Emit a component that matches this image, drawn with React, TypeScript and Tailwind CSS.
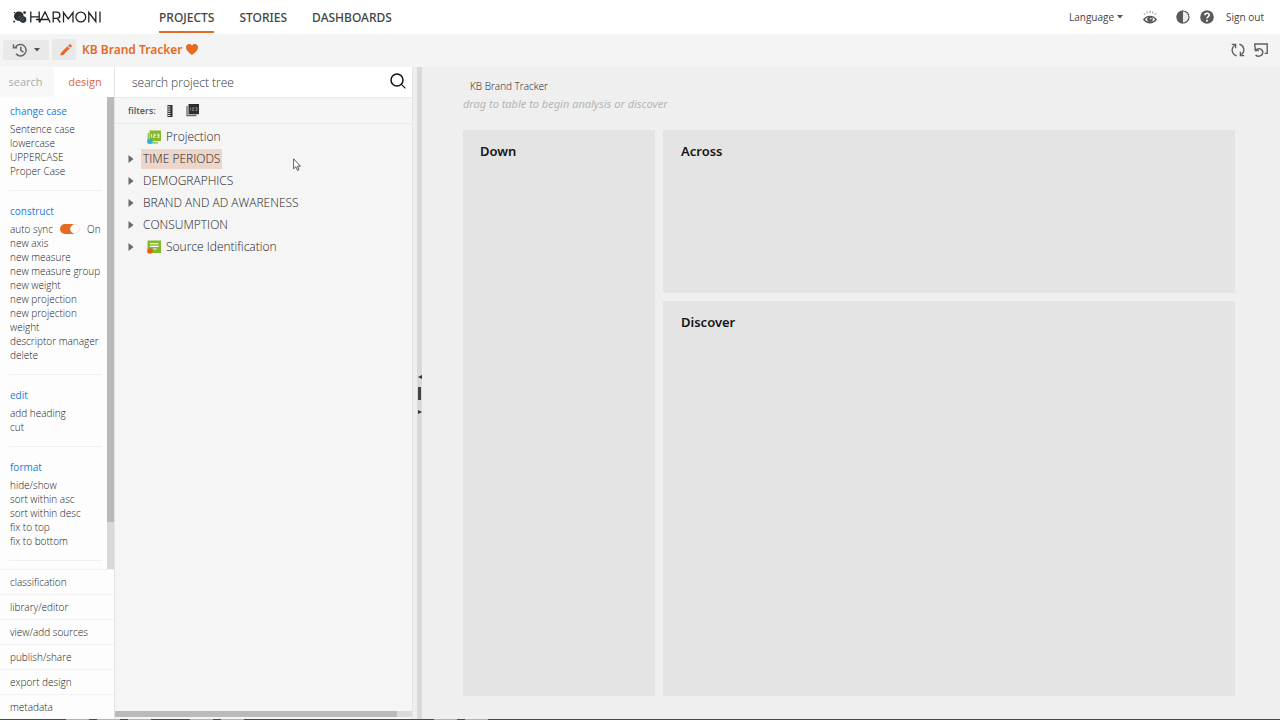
import React, { useState } from "react";

type Section = { title: string; items: string[] };

const sections: Section[] = [
  { title: "change case", items: ["Sentence case", "lowercase", "UPPERCASE", "Proper Case"] },
  {
    title: "construct",
    items: [
      "auto sync",
      "new axis",
      "new measure",
      "new measure group",
      "new weight",
      "new projection",
      "new projection weight",
      "descriptor manager",
      "delete",
    ],
  },
  { title: "edit", items: ["add heading", "cut"] },
  { title: "format", items: ["hide/show", "sort within asc", "sort within desc", "fix to top", "fix to bottom"] },
];

const footerItems = ["classification", "library/editor", "view/add sources", "publish/share", "export design", "metadata"];

function Logo() {
  return (
    <svg viewBox="0 0 88 14" className="h-3.5 w-22" role="img" aria-label="Harmoni">
      <circle cx="5.8" cy="6.2" r="4.8" fill="#2b2f33" />
      <circle cx="10" cy="9.6" r="3.3" fill="#2b2f33" />
      <circle cx="11.6" cy="2.600" r="1.400" fill="#2b2f33" />
      <circle cx="1.200" cy="11.400" r="1" fill="#2b2f33" />
      <circle cx="1.400" cy="2.400" r="0.700" fill="#2b2f33" />
      <path d="M5 8.500l3-3M7 10l3-3M8.500 11.500l2.500-2.500" stroke="#4b8e9b" strokeWidth="0.700" />
      <g fill="none" stroke="#222" strokeWidth="1.300">
        <path d="M17.800 1.500v11M26.200 1.500v11M17.800 6.800h8.400M26.500 12.500L32 2l5.200 10.500M23 9.500h13" />
        <path d="M40.200 12.500V2.200h3.600a3 3 0 0 1 0 6.200h-3.600M44.300 8.300l3 4.200" />
        <path d="M50.500 12.500V2.500l4.700 6.300L60 2.500v10" />
        <circle cx="67.800" cy="7" r="4.900" />
        <path d="M75.800 12.500V2.500l7 9v-10M87 1.500v11" />
      </g>
    </svg>
  );
}

function HistoryIcon() {
  return (
    <svg viewBox="0 0 16 14" className="h-3.5 w-4" fill="none" stroke="#666" strokeWidth="1.500">
      <path d="M3.600 4.200A5.700 5.700 0 1 1 4 10.800" />
      <path d="M1.500 1.200v3.600h3.600" />
      <path d="M8.800 3.800v3.600l2.700 1.700" />
    </svg>
  );
}

function PencilIcon() {
  return (
    <svg viewBox="0 0 14 14" className="size-3" fill="#e66a1f">
      <path d="M.5 13.500l.7-3.300 7.500-7.500 2.600 2.600-7.500 7.500zM9.500 1.900l1.300-1.300a1.300 1.300 0 0 1 1.800 0l.8.8a1.300 1.300 0 0 1 0 1.800l-1.300 1.300z" />
    </svg>
  );
}

function HeartIcon() {
  return (
    <svg viewBox="0 0 12 11" className="h-[11px] w-3" fill="#e66a1f">
      <path d="M6 11C4.500 9.500 0 6.800 0 3.400 0 1.400 1.400 0 3.200 0 4.400 0 5.400.6 6 1.600 6.600.6 7.600 0 8.800 0 10.600 0 12 1.400 12 3.400 12 6.800 7.500 9.500 6 11z" />
    </svg>
  );
}

function Caret() {
  return (
    <svg viewBox="0 0 6 4" className="h-1 w-1.5" fill="#555">
      <path d="M0 0h6L3 3.500z" />
    </svg>
  );
}

function EyeIcon() {
  return (
    <svg viewBox="0 0 14 14" className="size-3.5" fill="none" stroke="#5a5a5a">
      <path d="M.8 9.500C4 5.200 10 5.200 13.200 9.500 10 13.800 4 13.800.8 9.500z" strokeWidth="1.300" />
      <circle cx="7" cy="9.300" r="2.800" fill="#5a5a5a" stroke="none" />
      <circle cx="7.800" cy="8.600" r=".8" fill="#fff" stroke="none" />
      <path d="M1 3.200l1.200 1.400M3.800 1.500l.7 1.700M7 .8v2M10.200 1.500l-.7 1.700M13 3.200l-1.200 1.400" strokeWidth=".8" />
    </svg>
  );
}

function ContrastIcon() {
  return (
    <svg viewBox="0 0 14 14" className="size-3.5">
      <circle cx="7" cy="7" r="6" fill="#ececec" stroke="#5a5a5a" strokeWidth="1.200" />
      <path d="M7 .6a6.400 6.400 0 0 0 0 12.800z" fill="#5a5a5a" />
    </svg>
  );
}

function HelpIcon() {
  return (
    <svg viewBox="0 0 14 14" className="size-3.5">
      <circle cx="7" cy="7" r="6.800" fill="#5a5a5a" />
      <path d="M4.900 5.300c0-2.800 4.300-2.700 4.300-.2C9.200 6.700 7 6.700 7 8.600" fill="none" stroke="#fff" strokeWidth="1.600" />
      <circle cx="7" cy="10.700" r="1" fill="#fff" />
    </svg>
  );
}

function SyncIcon() {
  return (
    <svg viewBox="0 0 14 14" className="size-3.5" fill="none" stroke="#606060" strokeWidth="1.400">
      <path d="M5.600 12.800A6 6 0 0 1 3.600 2.200M.8 1.400h3.800v3.800" />
      <path d="M8.400 1.200a6 6 0 0 1 2 10.600M13.200 12.600H9.400V8.800" />
    </svg>
  );
}

function ResetIcon() {
  return (
    <svg viewBox="0 0 14 14" className="size-3.5" fill="none" stroke="#606060" strokeWidth="1.400">
      <path d="M.8 4V1h12.400v9.400h-2.600" />
      <path d="M1.200 4v3.600h3.600M1.600 7.200c2.400-2.600 7.200-1.700 7.200 2 0 3.800-4.800 5.200-7.200 2.700" />
    </svg>
  );
}

function SearchIcon() {
  return (
    <svg viewBox="0 0 16 16" className="size-4" fill="none" stroke="#111">
      <circle cx="7" cy="7" r="6" strokeWidth="1.500" />
      <path d="M11.400 11.400l4 4" strokeWidth="1.200" />
    </svg>
  );
}

function RulerIcon() {
  return (
    <svg viewBox="0 0 6 12" className="h-3 w-1.5">
      <path d="M.500 0h5v12h-5z" fill="#2d2d2d" />
      <path d="M1 1.800h2.500M1 4h2.500M1 6.200h2.500M1 8.400h2.500M1 10.500h2.500" stroke="#fff" strokeWidth=".9" />
    </svg>
  );
}

function StackIcon() {
  return (
    <svg viewBox="0 0 13 13" className="size-[13px]">
      <path d="M1 2V11.500h9.500" fill="none" stroke="#666" strokeWidth="1.300" />
      <path d="M2.500 0H13v10.200H2.500z" fill="#2d2d2d" />
      <path d="M4.500 3.500v3M6.300 3.500h1.500V5H6.300v1.500h1.700M9.400 3.500h1.600v3H9.400M9.400 5H11" stroke="#aaa" strokeWidth=".6" fill="none" />
    </svg>
  );
}

function ProjectionIcon() {
  return (
    <svg viewBox="0 0 14 14" className="size-3.5">
      <path d="M1.200 3v9.800H11" stroke="#83b92a" strokeWidth="1.200" fill="none" />
      <path d="M2.500.500H14v10.700H2.500z" fill="#83b92a" />
      <path d="M4.600 4v3.500M6.500 4.200h1.800v1.500H6.500v1.600h2M10.200 4.200H12v3.200h-1.800M10.200 5.700H12" stroke="#fff" strokeWidth=".8" fill="none" />
      <circle cx="3" cy="11.200" r="2.700" fill="#2fb0de" />
    </svg>
  );
}

function SourceIcon() {
  return (
    <svg viewBox="0 0 14 14" className="size-3.5">
      <path d="M.5.500H14V13H.5z" fill="#83b92a" />
      <path d="M3 3.800h8.600M3 6.400h8.600M6.500 9h2.800" stroke="#fff" strokeWidth="1.100" />
      <circle cx="3" cy="11" r="2.700" fill="#ee5a1c" />
    </svg>
  );
}

const tree: { label: string; icon?: React.ReactNode; leaf?: boolean; selected?: boolean }[] = [
  { label: "Projection", icon: <ProjectionIcon />, leaf: true },
  { label: "TIME PERIODS", selected: true },
  { label: "DEMOGRAPHICS" },
  { label: "BRAND AND AD AWARENESS" },
  { label: "CONSUMPTION" },
  { label: "Source Identification", icon: <SourceIcon /> },
];

function Header() {
  return (
    <header className="flex h-[34px] shrink-0 items-stretch bg-white pl-[13px] pr-4 text-[#444]">
      <a href="#home" className="flex w-[146px] items-center">
        <Logo />
      </a>
      <nav className="flex gap-[25px] pb-px text-[12px] font-medium leading-[18px]">
        <a href="#projects" className="flex items-center border-b-2 border-[#e66a1f] pt-1">PROJECTS</a>
        <a href="#stories" className="flex items-center border-b-2 border-transparent pt-1">STORIES</a>
        <a href="#dashboards" className="flex items-center border-b-2 border-transparent pt-1">DASHBOARDS</a>
      </nav>
      <div className="ml-auto flex items-center font-['Open_Sans',sans-serif] text-[10px] text-[#444]">
        <button className="flex items-center gap-[3px]">
          Language <Caret />
        </button>
        <button aria-label="Preview" className="ml-5"><EyeIcon /></button>
        <button aria-label="Contrast" className="ml-[19px]"><ContrastIcon /></button>
        <button aria-label="Help" className="ml-[10px]"><HelpIcon /></button>
        <a href="#signout" className="ml-3">Sign out</a>
      </div>
    </header>
  );
}

function Toolbar() {
  return (
    <div className="flex h-[33px] shrink-0 items-center bg-[#f4f4f4] pb-[2px] pl-[3px] pr-3">
      <button aria-label="History" className="flex h-5 w-[46px] items-center justify-center gap-[6px] rounded-xs bg-[#e9e9e9]">
        <HistoryIcon />
        <Caret />
      </button>
      <button aria-label="Edit" className="ml-[3px] flex h-[21px] w-6 items-center justify-center rounded-xs bg-[#e9e9e9] pl-[3px]">
        <PencilIcon />
      </button>
      <h1 className="ml-[6px] text-[12px] font-semibold text-[#e66a1f]">KB Brand Tracker</h1>
      <button aria-label="Favourite" className="ml-[3px]"><HeartIcon /></button>
      <button aria-label="Refresh" className="ml-auto"><SyncIcon /></button>
      <button aria-label="Reset layout" className="ml-[9px]"><ResetIcon /></button>
    </div>
  );
}

function Sidebar() {
  const [sync, setSync] = useState(true);
  return (
    <aside className="flex w-[114px] shrink-0 flex-col bg-[#fdfdfd] font-['Open_Sans',sans-serif] text-[10px] font-light text-[#222]">
      <div className="flex h-[30px] shrink-0 text-[11px]">
        <button className="w-[54px] bg-[#f8f8f8] pr-[3px] font-normal text-[#aaa]">search</button>
        <button className="flex-1 bg-white pl-[2px] font-normal text-[#e0663a]">design</button>
      </div>
      <div className="flex min-h-0 flex-1 overflow-hidden">
        <div className="min-w-0 flex-1 pl-[9px] pr-[5px]">
          {sections.map((section, index) => (
            <section
              key={section.title}
              className={index === 0 ? "border-b border-[#f0f0f0] pb-3 pl-px pt-[6px]" : "border-b border-[#f0f0f0] pb-3 pl-px pt-3"}
            >
              <h2 className="mb-[3px] font-normal leading-4 text-[#1a7be0]">{section.title}</h2>
              {section.items.map((item) =>
                item === "auto sync" ? (
                  <label key={item} className="flex h-3.5 items-center whitespace-nowrap leading-[14px]">
                    <span className="w-[50px]">{item}</span>
                    <input type="checkbox" checked={sync} onChange={() => setSync(!sync)} className="sr-only" />
                    <span className="flex h-2.5 w-5 shrink-0 items-center">
                      <span className="h-2.5 w-3.5 rounded-l-full bg-[#e66a1f]" />
                      <span className="-ml-1 size-2.5 rounded-full border border-[#f6e3d8] bg-white" />
                    </span>
                    <span className="ml-[7px]">{sync ? "On" : "Off"}</span>
                  </label>
                ) : (
                  <button
                    key={item}
                    className={
                      item === "new projection weight"
                        ? "block text-left leading-[14px]"
                        : "block whitespace-nowrap text-left leading-[14px]"
                    }
                  >
                    {item}
                  </button>
                ),
              )}
            </section>
          ))}
        </div>
        <div className="w-[7px] shrink-0 bg-[#d8d8d8]">
          <div className="h-[90%] bg-[#b9b9b9]" />
        </div>
      </div>
      <div className="shrink-0">
        {footerItems.map((item) => (
          <button key={item} className="block h-[25px] w-full border-t border-[#f2f2f2] pl-[10px] text-left">{item}</button>
        ))}
      </div>
    </aside>
  );
}

function TreePane() {
  return (
    <section className="relative flex w-[299px] shrink-0 flex-col border-x border-[#e4e4e4] bg-[#f5f5f5] font-['Open_Sans',sans-serif] text-[#222]">
      <div className="flex h-[31px] shrink-0 items-center border-b border-[#ececec] bg-white pl-[17px] pr-[6px]">
        <input
          aria-label="search project tree"
          placeholder="search project tree"
          className="min-w-0 flex-1 pt-[2px] text-[12px] font-light outline-none placeholder:text-[#333]"
        />
        <button aria-label="Search" className="pb-[2px]"><SearchIcon /></button>
      </div>
      <div className="flex h-[26px] shrink-0 items-center border-b border-[#e9eaea] pl-[13px] text-[9px] font-semibold text-[#555]">
        filters:
        <button aria-label="Filter measures" className="ml-[11px]"><RulerIcon /></button>
        <button aria-label="Filter projections" className="ml-[13px]"><StackIcon /></button>
      </div>
      <ul className="flex flex-1 flex-col gap-[2px] pt-[3px] text-[12px] font-light">
        {tree.map((node) => (
          <li key={node.label} className="flex h-5 items-center pl-[13px]">
            <span className="w-[13px]">
              {!node.leaf && (
                <svg viewBox="0 0 6 8" className="h-2 w-1.5" fill="#6a6a6a">
                  <path d="M.5 0L5.500 4 .5 8z" />
                </svg>
              )}
            </span>
            <button className={node.selected ? "flex h-5 items-center bg-[#ecd6ca] px-0.5" : "flex h-5 items-center px-0.5"}>
              {node.icon && <span className="ml-1 mr-[5px]">{node.icon}</span>}
              {node.label}
            </button>
          </li>
        ))}
      </ul>
      <div className="mb-[2px] h-[6px] shrink-0 bg-[#dadada]">
        <div className="h-full w-[95%] bg-[#bababa]" />
      </div>
      <svg viewBox="0 0 8 13" className="pointer-events-none absolute left-[178px] top-[91px] h-[13px] w-2" fill="#fff" stroke="#333" strokeWidth=".8">
        <path d="M.6.800v10l2.300-2.100 1.600 3.700 1.500-.7-1.500-3.500h3z" />
      </svg>
    </section>
  );
}

function Splitter() {
  return (
    <div className="ml-1 flex w-[5px] shrink-0 flex-col items-center justify-center gap-2 bg-[#d9d9db] pt-[3px]">
      <svg viewBox="0 0 4 4" className="size-1" fill="#333"><path d="M4 0v4L0 2z" /></svg>
      <span className="mb-[2px] h-[13px] w-[3px] bg-[#444]" />
      <svg viewBox="0 0 4 4" className="size-1" fill="#333"><path d="M0 0v4l4-2z" /></svg>
    </div>
  );
}

function Workspace() {
  return (
    <main className="flex min-w-0 flex-1 flex-col bg-[#efefef] pb-[23px] pl-[41px] pr-[45px] pt-[11px]">
      <h2 className="pl-[7px] font-['Open_Sans',sans-serif] text-[10px] font-light leading-4 text-[#222]">KB Brand Tracker</h2>
      <p className="text-[11px] italic leading-5 text-[#b5b5b5]">drag to table to begin analysis or discover</p>
      <div className="mt-4 flex flex-1 gap-2 text-[13px] font-semibold leading-[18px] text-[#151515]">
        <section className="w-48 shrink-0 bg-[#e4e4e4] px-[17px] py-3"><h3>Down</h3></section>
        <div className="flex flex-1 flex-col gap-2">
          <section className="h-[163px] shrink-0 bg-[#e4e4e4] px-[18px] py-3"><h3>Across</h3></section>
          <section className="flex-1 bg-[#e4e4e4] px-[18px] py-3"><h3>Discover</h3></section>
        </div>
      </div>
    </main>
  );
}

function BottomStrip() {
  return (
    <div className="flex h-px shrink-0 bg-[#4a4a4a]">
      <span className="ml-[66px] w-[23px] bg-[#b9a8e0]" />
      <span className="ml-2 w-[23px] bg-[#b9a8e0]" />
      <span className="ml-2 w-[23px] bg-[#b9a8e0]" />
      <span className="ml-[39px] w-[23px] bg-[#b9a8e0]" />
      <span className="ml-2 w-[23px] bg-[#b9a8e0]" />
      <span className="ml-[190px] w-[23px] bg-[#b9a8e0]" />
      <span className="ml-2 w-[23px] bg-[#b9a8e0]" />
    </div>
  );
}

export default function App() {
  return (
    <div className="flex h-screen flex-col overflow-hidden bg-[#efefef] font-['Noto_Sans',sans-serif]">
      <Header />
      <Toolbar />
      <div className="flex min-h-0 flex-1">
        <Sidebar />
        <TreePane />
        <Splitter />
        <Workspace />
      </div>
      <BottomStrip />
    </div>
  );
}
